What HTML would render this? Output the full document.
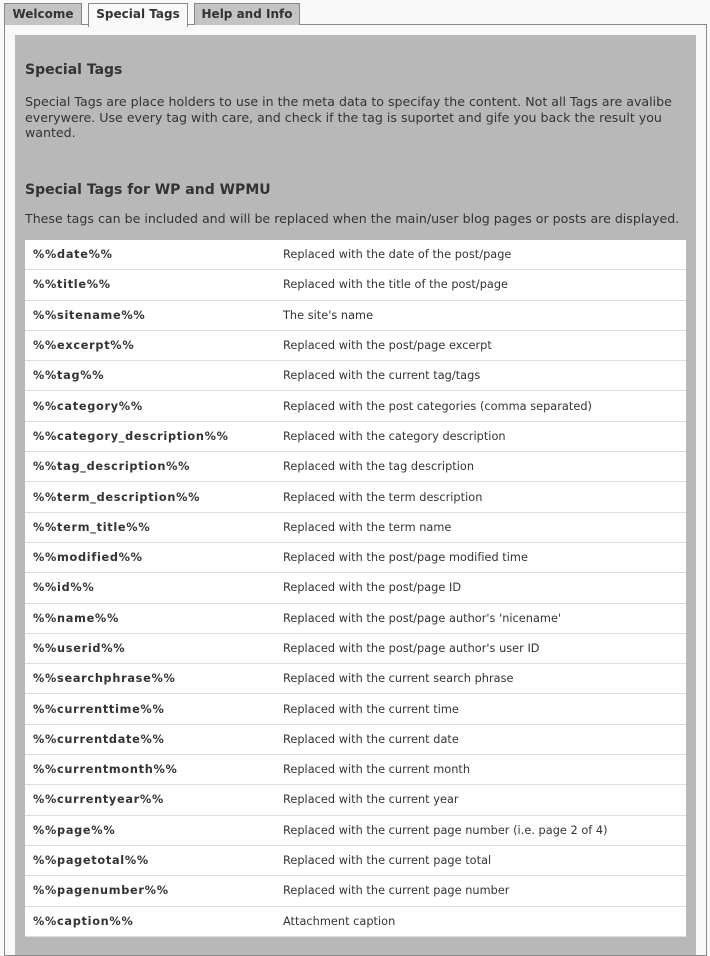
<!DOCTYPE html>
<html><head><style>
body{margin:0;width:710px;height:945px;background:#f9f9f9;font-family:"DejaVu Sans",Verdana,sans-serif;color:#333;overflow:hidden;position:relative}
.tab{position:absolute;top:3px;height:21px;border:1px solid #888;border-bottom:none;background:#c4c4c4;font-weight:bold;font-size:12px;line-height:21px;text-align:center;color:#333}
.panel{position:absolute;left:4px;top:24px;width:701px;height:930px;border:1px solid #888;background:#f9f9f9}
.gray{position:absolute;left:15px;top:35px;width:681px;height:920px;background:#b8b8b8}
h3{position:absolute;left:25px;margin:0;font-size:14px;font-weight:bold;color:#333}
p{position:absolute;left:25px;margin:0;font-size:12.6px;line-height:15.5px;color:#333}
table{position:absolute;left:25px;top:240px;width:661px;border-collapse:collapse;background:#fff;font-size:11.3px;table-layout:fixed}
td{height:29.3px;border-bottom:1px solid #ddd;padding:0 0 0 8px;vertical-align:middle;white-space:nowrap}
td.k{font-weight:bold;letter-spacing:0.7px}
td.v{color:#333;letter-spacing:0.03px}
</style></head><body>
<div class="panel"></div>
<div class="tab" style="left:4px;width:76px">Welcome</div>
<div class="tab" style="left:88px;width:98px;background:#f9f9f9;height:23px;top:3px">Special Tags</div>
<div class="tab" style="left:194px;width:104px">Help and Info</div>
<div class="gray"></div>
<h3 style="top:62px">Special Tags</h3>
<p style="top:94px;width:665px">Special Tags are place holders to use in the meta data to specifay the content. Not all Tags are avalibe<br>everywere. Use every tag with care, and check if the tag is suportet and gife you back the result you<br>wanted.</p>
<h3 style="top:182px">Special Tags for WP and WPMU</h3>
<p style="top:211px;white-space:nowrap">These tags can be included and will be replaced when the main/user blog pages or posts are displayed.</p>
<table>
<colgroup><col style="width:250px"><col></colgroup>
<tr><td class="k">%%date%%</td><td class="v">Replaced with the date of the post/page</td></tr>
<tr><td class="k">%%title%%</td><td class="v">Replaced with the title of the post/page</td></tr>
<tr><td class="k">%%sitename%%</td><td class="v">The site's name</td></tr>
<tr><td class="k">%%excerpt%%</td><td class="v">Replaced with the post/page excerpt</td></tr>
<tr><td class="k">%%tag%%</td><td class="v">Replaced with the current tag/tags</td></tr>
<tr><td class="k">%%category%%</td><td class="v">Replaced with the post categories (comma separated)</td></tr>
<tr><td class="k">%%category_description%%</td><td class="v">Replaced with the category description</td></tr>
<tr><td class="k">%%tag_description%%</td><td class="v">Replaced with the tag description</td></tr>
<tr><td class="k">%%term_description%%</td><td class="v">Replaced with the term description</td></tr>
<tr><td class="k">%%term_title%%</td><td class="v">Replaced with the term name</td></tr>
<tr><td class="k">%%modified%%</td><td class="v">Replaced with the post/page modified time</td></tr>
<tr><td class="k">%%id%%</td><td class="v">Replaced with the post/page ID</td></tr>
<tr><td class="k">%%name%%</td><td class="v">Replaced with the post/page author's 'nicename'</td></tr>
<tr><td class="k">%%userid%%</td><td class="v">Replaced with the post/page author's user ID</td></tr>
<tr><td class="k">%%searchphrase%%</td><td class="v">Replaced with the current search phrase</td></tr>
<tr><td class="k">%%currenttime%%</td><td class="v">Replaced with the current time</td></tr>
<tr><td class="k">%%currentdate%%</td><td class="v">Replaced with the current date</td></tr>
<tr><td class="k">%%currentmonth%%</td><td class="v">Replaced with the current month</td></tr>
<tr><td class="k">%%currentyear%%</td><td class="v">Replaced with the current year</td></tr>
<tr><td class="k">%%page%%</td><td class="v">Replaced with the current page number (i.e. page 2 of 4)</td></tr>
<tr><td class="k">%%pagetotal%%</td><td class="v">Replaced with the current page total</td></tr>
<tr><td class="k">%%pagenumber%%</td><td class="v">Replaced with the current page number</td></tr>
<tr><td class="k">%%caption%%</td><td class="v">Attachment caption</td></tr>
</table>
</body></html>
